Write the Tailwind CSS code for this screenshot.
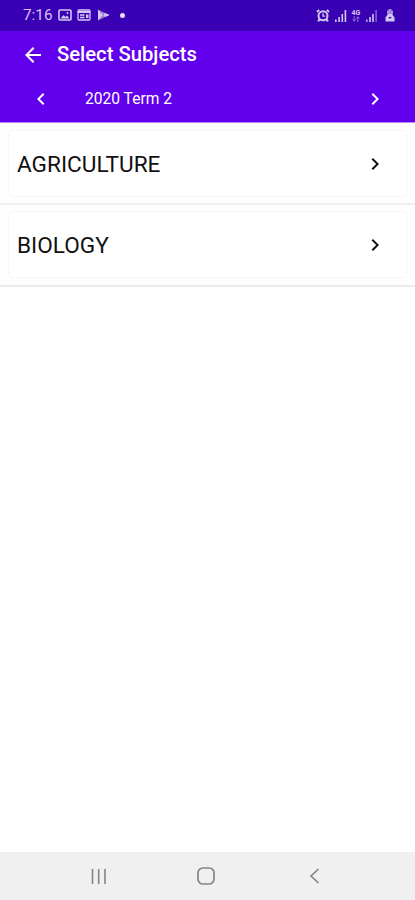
<!DOCTYPE html>
<html lang="en">
<head>
  <meta charset="UTF-8" />
  <title>Select Subjects</title>
  <meta name="viewport" content="width=device-width, initial-scale=1.0" />
  <script src="https://cdn.jsdelivr.net/npm/@tailwindcss/browser@4"></script>
</head>
<body class="bg-white h-[900px] flex flex-col overflow-hidden font-[Roboto,sans-serif]">

<!-- Status bar -->
<div class="h-[31px] shrink-0 bg-[#3a00b3] flex items-center justify-between pl-[23px] pr-[20px] text-[#d3c6f2]">
  <div class="flex items-center">
    <span class="w-[35px] text-[15.300px] leading-none">7:16</span>
    <svg class="w-[14px] h-[12px] mr-[5px]" viewBox="0 0 14 12" fill="none" stroke="currentColor" stroke-width="1.6">
      <rect x="1" y="1" width="12" height="10" rx="1" />
      <path d="M2.500 9.500l3-3.500 2 2 1.500-1.500 2.500 3z" fill="currentColor" stroke="none" />
      <circle cx="9.500" cy="4" r="1" fill="currentColor" stroke="none" />
    </svg>
    <svg class="w-[14px] h-[12px] mr-[6px]" viewBox="0 0 14 12" fill="none" stroke="currentColor" stroke-width="1.300">
      <rect x="1" y="1" width="12" height="10" rx="1" />
      <path d="M1 3h12" stroke-width="2" />
      <path d="M3 6h4.500M3 8.500h4.500" />
      <path d="M9 5.500h2.500v3.500H9z" fill="currentColor" stroke="none" />
    </svg>
    <svg class="w-[13px] h-[12px] mr-[10px]" viewBox="0 0 13 12" fill="currentColor">
      <path d="M1 .5l11.500 5.500L1 11.500z" fill-opacity=".6" />
      <path d="M1 .5l5 5.500-5 5.500zM8 3.900l4.500 2.100L8 8.100 6.500 6z" />
    </svg>
    <span class="size-[5px] rounded-full bg-[#e4dcf8]"></span>
  </div>
  <div class="flex items-center">
    <svg class="w-[14px] h-[13px] mr-[4px]" viewBox="0 0 14 13" fill="none" stroke="currentColor" stroke-width="2">
      <circle cx="7" cy="6.800" r="4.500" />
      <path d="M7 4.300v2.800h2.200" stroke-width="1.300" />
      <path d="M1 3l2.200-2M13 3l-2.200-2M3.500 10.500L2 12.300M10.500 10.500l1.500 1.800" />
    </svg>
    <svg class="w-[13px] h-[12px] mr-[4px]" viewBox="0 0 13 12" fill="currentColor">
      <path d="M1 9.500h1.600V12H1zM4.300 7h1.600v5H4.300zM7.500 4h1.600v8H7.500zM10.600 0h1.600v12h-1.600z" />
    </svg>
    <div class="w-[10px] mr-[4px] flex flex-col items-center">
      <span class="text-[7px] leading-[6px] font-bold">4G</span>
      <svg class="w-[8px] h-[6px] opacity-60" viewBox="0 0 8 6" fill="none" stroke="currentColor" stroke-width="1">
        <path d="M2.200 0v5M.7 3.500l1.500 1.800 1.500-1.800M5.800 6V1M4.300 2.500L5.800.7l1.500 1.800" />
      </svg>
    </div>
    <svg class="w-[13px] h-[12px] mr-[7px] opacity-80" viewBox="0 0 13 12" fill="currentColor">
      <path d="M1 9.500h1.600V12H1zM4 7h2v5H4zM7 4h2v8H7z" />
      <path d="M10.300 0h1.600v12h-1.600z" fill-opacity=".6" />
    </svg>
    <svg class="w-[10px] h-[13px]" viewBox="0 0 10 13" fill="currentColor">
      <path d="M3.500 0h3v1.500H8V5H2V1.500h1.500z" fill-opacity=".7" />
      <path d="M.5 12.500V8.500L3 5h4l2.500 3.500v4z" />
      <path d="M3.200 8h3.600L5 10z" fill="#3a00b3" />
    </svg>
  </div>
</div>

<!-- App bar -->
<header class="h-[92px] shrink-0 bg-[#6200ee] border-b border-[#b98af7] text-white">
  <div class="h-[44px] flex items-center pl-[21px] pt-[4px]">
    <svg class="size-6 fill-current" viewBox="0 0 24 24"><path d="M20 11H7.830l5.590-5.590L12 4l-8 8 8 8 1.410-1.410L7.830 13H20v-2z" /></svg>
    <h1 class="ml-3 -mt-[3px] text-[20.250px] leading-6 font-medium">Select Subjects</h1>
  </div>
  <div class="h-[47px] flex items-center pl-[29px] pr-[28px]">
    <svg class="size-6 fill-current" viewBox="0 0 24 24"><path d="M15.410 7.410L14 6l-6 6 6 6 1.410-1.410L10.830 12z" /></svg>
    <span class="ml-8 text-[15.600px] leading-6">2020 Term 2</span>
    <svg class="ml-auto size-6 fill-current" viewBox="0 0 24 24"><path d="M10 6L8.590 7.410 13.170 12l-4.580 4.590L10 18l6-6z" /></svg>
  </div>
</header>

<!-- Subjects -->
<main class="flex-1 text-[#111111]">
  <div class="h-[82px] px-2 pt-[7px] border-b-2 border-[#f0f0f0] bg-[#fefefe]">
    <div class="h-[67px] flex items-center pl-2 pr-[19px] rounded-sm border border-[#f6f6f6] bg-white">
      <span class="pt-[2px] text-[22.600px] leading-7">AGRICULTURE</span>
      <svg class="ml-auto size-6 fill-current" viewBox="0 0 24 24"><path d="M10 6L8.590 7.410 13.170 12l-4.580 4.590L10 18l6-6z" /></svg>
    </div>
  </div>
  <div class="h-[82px] px-2 pt-[6px] border-b-2 border-[#ebebeb] bg-[#fefefe]">
    <div class="h-[67px] flex items-center pl-2 pr-[19px] rounded-sm border border-[#f6f6f6] bg-white">
      <span class="pt-[2px] text-[22.600px] leading-7">BIOLOGY</span>
      <svg class="ml-auto size-6 fill-current" viewBox="0 0 24 24"><path d="M10 6L8.590 7.410 13.170 12l-4.580 4.590L10 18l6-6z" /></svg>
    </div>
  </div>
</main>

<!-- Navigation bar -->
<nav class="h-12 shrink-0 bg-[#f0f0f0] flex items-center pl-[91px] text-[#858585]">
  <svg class="w-4 h-[15px]" viewBox="0 0 16 15" fill="none" stroke="currentColor" stroke-width="1.600"><path d="M1.500 0v15M7.700 0v15M14 0v15" /></svg>
  <svg class="ml-[90px] size-[18px]" viewBox="0 0 18 18" fill="none" stroke="currentColor" stroke-width="1.700"><rect x="1" y="1" width="16" height="16" rx="5" /></svg>
  <svg class="ml-[94px] w-[11px] h-[16px]" viewBox="0 0 11 16" fill="none" stroke="currentColor" stroke-width="1.700"><path d="M9.500 1L2 8l7.500 7" /></svg>
</nav>

</body>
</html>
